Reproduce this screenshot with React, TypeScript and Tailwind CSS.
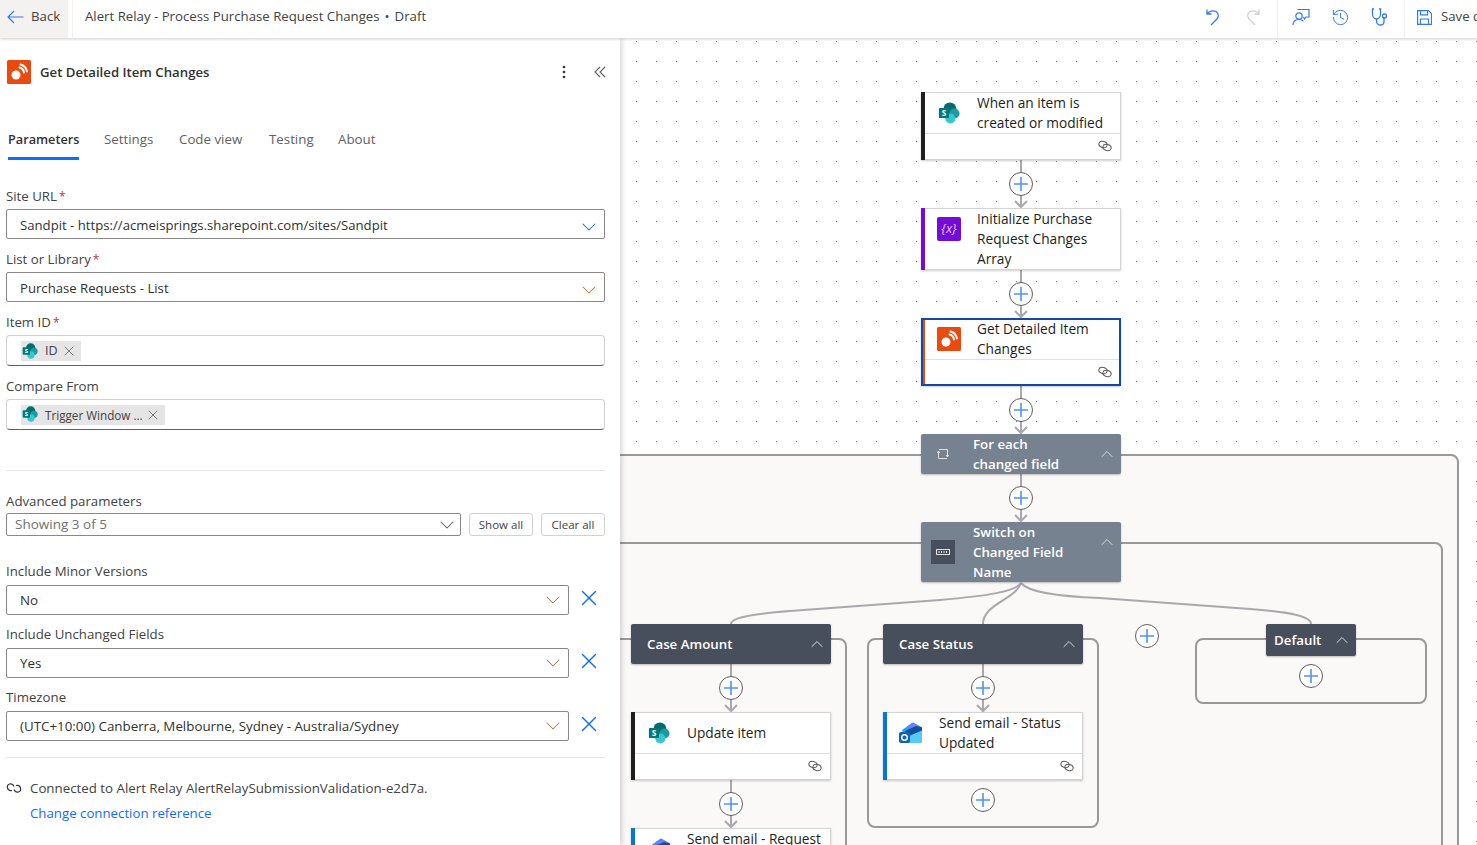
import { ChevronDown, ChevronUp, History, X } from "lucide-react";

function SharePointIcon({ size = 22 }: { size?: number }) {
  return (
    <svg width={size} height={size} viewBox="0 0 24 24" className="shrink-0">
      <circle cx="13" cy="7.500" r="7" fill="#036c70" />
      <circle cx="18" cy="12.500" r="5.500" fill="#1a9ba1" />
      <circle cx="13.500" cy="18" r="5.500" fill="#37c6d0" />
      <rect x="1" y="6.500" width="11" height="11" rx="1" fill="#03787c" />
      <text x="6.500" y="15.300" textAnchor="middle" fontSize="9" fontWeight="700" fill="#fff">S</text>
    </svg>
  );
}

function RssIcon({ size = 24 }: { size?: number }) {
  return (
    <svg width={size} height={size} viewBox="0 0 24 24" className="shrink-0">
      <rect width="24" height="24" rx="1.500" fill="#eb4a0e" />
      <circle cx="9" cy="15" r="4.500" fill="#fff" />
      <path d="M12.500 7.500a6 6 0 0 1 4.500 5M13.500 4.500a9 9 0 0 1 6.500 7" fill="none" stroke="#fff" strokeWidth="2" strokeLinecap="round" />
    </svg>
  );
}

function VarIcon() {
  return (
    <div className="flex h-6 w-6 items-center justify-center rounded-[2px] bg-[#770bd6] text-[13px] italic text-[#d9c2f5]">
      {"{x}"}
    </div>
  );
}

function OutlookIcon() {
  return (
    <svg width="24" height="24" viewBox="0 0 24 24" className="shrink-0">
      <path d="M3 9 14 1.500l9 5V20a2 2 0 0 1-2 2H8z" fill="#2b9df0" />
      <path d="M8 5.500 14 1.500l9 5-6 3.500z" fill="#6b7ff5" />
      <path d="M6 10l11-5 6 1.500v3.500L11 15z" fill="#0f4f9e" />
      <path d="M10 15l13-5.500V20a2 2 0 0 1-2 2H10z" fill="#55ccf5" />
      <rect x="0" y="11" width="11" height="11" rx="2" fill="#0f5fc4" />
      <circle cx="5.500" cy="16.500" r="2.800" fill="none" stroke="#fff" strokeWidth="1.500" />
    </svg>
  );
}

function LinkIcon() {
  return (
    <svg width="14" height="12" viewBox="0 0 14 12" className="shrink-0" fill="none" stroke="#605e5c" strokeWidth="1">
      <ellipse cx="5" cy="4.500" rx="4.200" ry="3" transform="rotate(15 5 4.500)" />
      <ellipse cx="9" cy="7.500" rx="4.200" ry="3" transform="rotate(15 9 7.500)" />
    </svg>
  );
}

function Chevron({ tone }: { tone: string }) {
  return <ChevronDown size={24} strokeWidth={1.05} className={`-my-1 shrink-0 ${tone}`} />;
}

function Label({ text, required }: { text: string; required?: boolean }) {
  return (
    <div className="h-5 text-[13.250px] leading-5 text-[#424242]">
      {text}
      {required && <span className="ml-[2px] text-[12px] text-[#c4314b]">*</span>}
    </div>
  );
}

function SelectBox({
  value,
  tone,
  className,
  textClass = "pt-px text-[13.350px]",
}: {
  value: string;
  tone: string;
  className: string;
  textClass?: string;
}) {
  return (
    <div className={`flex h-[30px] items-center justify-between rounded-[2px] border border-[#8a8886] pl-[13px] pr-[3px] text-[#323130] ${className}`}>
      <span className={textClass}>{value}</span>
      <Chevron tone={tone} />
    </div>
  );
}

function TokenBox({ text, width, small }: { text: string; width: string; small?: boolean }) {
  return (
    <div className="flex h-[31px] items-center rounded-[4px] border border-[#d1d1d1] border-b-[#616161] pl-[14px]">
      <div className={`flex h-5 items-center justify-between bg-[#e5e5e5] pl-px pr-1 text-[#424242] ${width} ${small ? "text-[11.700px]" : "text-[12.500px]"}`}>
        <span className="flex items-center gap-[7px]">
          <SharePointIcon size={16} />
          <span className="whitespace-nowrap pt-[2px]">{text}</span>
        </span>
        <X size={16} strokeWidth={1} className="shrink-0 text-[#424242]" />
      </div>
    </div>
  );
}

function RemovableSelect({ label, value }: { label: string; value: string }) {
  return (
    <div className="mt-[9px]">
      <Label text={label} />
      <div className="mt-1 flex items-center">
        <SelectBox value={value} tone="text-[#a87a50]" className="w-[563px]" />
        <X size={26} strokeWidth={1.3} className="mb-[-2px] ml-[7px] mt-[-6px] shrink-0 text-[#0f6cff]" />
      </div>
    </div>
  );
}

function Panel() {
  return (
    <div className="relative z-10 h-full w-[620px] shrink-0 overflow-hidden bg-white pl-[6px] pr-[15px] shadow-[2px_0_5px_rgba(0,0,0,0.16)]">
      <div className="mt-[22px] flex h-6 items-center pl-px">
        <RssIcon />
        <span className="ml-[9px] pt-[2px] text-[13.200px] font-semibold text-[#323130]">Get Detailed Item Changes</span>
        <svg width="4" height="14" viewBox="0 0 4 14" className="ml-auto mr-[28px]" fill="#323130">
          <circle cx="2" cy="2" r="1.300" />
          <circle cx="2" cy="7" r="1.300" />
          <circle cx="2" cy="12" r="1.300" />
        </svg>
        <svg width="12" height="12" viewBox="0 0 12 12" className="mr-[-1px]" fill="none" stroke="#605e5c" strokeWidth="1.100">
          <path d="M6 1 1 6l5 5M11 1 6 6l5 5" />
        </svg>
      </div>

      <div className="mt-[45px] flex h-[31px] pl-[2px] text-[13.300px] leading-[21px] text-[#616161]">
        <div className="w-[96px]">
          <span className="inline-block h-[31px] w-[71px] border-b-[3px] border-[#0f6cff] text-[12.700px] font-semibold leading-5 text-[#323130]">Parameters</span>
        </div>
        <div className="w-[75px]">Settings</div>
        <div className="w-[90px]">Code view</div>
        <div className="w-[69px]">Testing</div>
        <div>About</div>
      </div>

      <div className="mt-[26px]">
        <Label text="Site URL" required />
      </div>
      <div className="mt-[3px]">
        <SelectBox
          value="Sandpit - https://acmeisprings.sharepoint.com/sites/Sandpit"
          tone="mt-px text-[#0f6cbd]"
          className="w-full"
          textClass="pt-1 text-[13.170px]"
        />
      </div>
      <div className="mt-[10px]">
        <Label text="List or Library" required />
      </div>
      <div className="mt-[3px]">
        <SelectBox value="Purchase Requests - List" tone="mt-px text-[#c8702b]" className="w-full" textClass="pt-1 text-[13.170px]" />
      </div>
      <div className="mt-[10px]">
        <Label text="Item ID" required />
      </div>
      <div className="mt-[3px]">
        <TokenBox text="ID" width="w-[60px]" />
      </div>
      <div className="mt-[10px]">
        <Label text="Compare From" />
      </div>
      <div className="mt-[3px]">
        <TokenBox text="Trigger Window ..." width="w-[144px]" small />
      </div>

      <div className="mt-[40px] h-px bg-[#e5e5e5]" />

      <div className="mt-[20px]">
        <Label text="Advanced parameters" />
      </div>
      <div className="mt-[2px] flex h-[23px] gap-2">
        <div className="flex w-[455px] items-center justify-between rounded-[2px] border border-[#8a8886] pl-2 pr-px text-[13.500px] text-[#707070]">
          <span>Showing 3 of 5</span>
          <Chevron tone="text-[#605e5c]" />
        </div>
        <div className="flex w-[64px] items-center justify-center rounded-[3px] border border-[#d1d1d1] text-[11.500px] text-[#424242]">Show all</div>
        <div className="flex w-[64px] items-center justify-center rounded-[3px] border border-[#d1d1d1] text-[11.500px] text-[#424242]">Clear all</div>
      </div>

      <div className="h-4" />
      <RemovableSelect label="Include Minor Versions" value="No" />
      <RemovableSelect label="Include Unchanged Fields" value="Yes" />
      <RemovableSelect label="Timezone" value="(UTC+10:00) Canberra, Melbourne, Sydney - Australia/Sydney" />

      <div className="mt-4 h-px bg-[#e5e5e5]" />

      <div className="mt-5 flex h-5 items-center text-[13.300px] text-[#424242]">
        <svg width="16" height="14" viewBox="0 0 16 14" fill="none" stroke="#323130" strokeWidth="1.200" className="shrink-0">
          <path d="M8 5.500C7 3 5 2.500 3.500 3S1 5 1.500 7 4 10 6 9.500M8 8.500c1 2.500 3 3 4.500 2.500s2.500-2 2-4-2.500-3-4.500-2.500" />
        </svg>
        <span className="ml-2 pt-[2px]">Connected to Alert Relay AlertRelaySubmissionValidation-e2d7a.</span>
      </div>
      <div className="mt-[5px] h-5 pl-6 text-[13.250px] leading-5 text-[#0f6cff]">Change connection reference</div>
    </div>
  );
}

function Plus({ className }: { className: string }) {
  return (
    <div className={`absolute flex h-6 w-6 items-center justify-center rounded-full border border-[#605e5c] bg-white ${className}`}>
      <svg width="14" height="14" viewBox="0 0 14 14" stroke="#4f94f5" strokeWidth="1.600">
        <path d="M7 0v14M0 7h14" />
      </svg>
    </div>
  );
}

function ActionNode({
  title,
  icon,
  bar,
  className,
  footer = true,
}: {
  title: string[];
  icon: React.ReactNode;
  bar: string;
  className: string;
  footer?: boolean;
}) {
  return (
    <div className={`absolute flex w-[200px] bg-white shadow-[inset_0_0_0_1px_#d4d4d4,0_1px_2px_rgba(0,0,0,0.2)] ${className}`}>
      <div className={`w-1 shrink-0 ${bar}`} />
      <div className="flex min-w-0 flex-1 flex-col">
        <div className="flex min-h-[41px] flex-1 items-center">
          <div className="mt-[9px] flex h-6 w-[48px] shrink-0 items-center justify-center self-start">{icon}</div>
          <div className="pl-1 text-[13.700px] font-medium leading-5 text-[#201f1e]">
            {title.map((line, i) => (
              <div key={i} className="whitespace-nowrap">{line}</div>
            ))}
          </div>
        </div>
        {footer && (
          <div className="mr-px flex h-[27px] shrink-0 items-center justify-end border-t border-[#e1dfdd] pb-[2px] pr-2">
            <LinkIcon />
          </div>
        )}
      </div>
    </div>
  );
}

function GroupNode({
  title,
  icon,
  className,
  tone,
  textLeft,
  chevronTop = "top-[10px]",
}: {
  title: string[];
  icon?: React.ReactNode;
  className: string;
  tone: string;
  textLeft: string;
  chevronTop?: string;
}) {
  return (
    <div className={`absolute flex items-center rounded-[2px] text-[13.300px] font-semibold leading-5 text-white shadow-[0_1px_2px_rgba(0,0,0,0.25)] ${tone} ${className}`}>
      {icon}
      <div className={textLeft}>
        {title.map((line) => (
          <div key={line} className="whitespace-nowrap">{line}</div>
        ))}
      </div>
      <ChevronUp size={20} strokeWidth={1.2} className={`absolute right-[4px] text-[#dcdcdc] ${chevronTop}`} />
    </div>
  );
}

const EDGE_PATHS = [
  "M1021 160V207M1015 201l6 6 6-6",
  "M1021 270V317M1015 311l6 6 6-6",
  "M1021 386V433M1015 427l6 6 6-6",
  "M1021 474V521M1015 515l6 6 6-6",
  "M731 664V711M725 705l6 6 6-6",
  "M731 780V827M725 821l6 6 6-6",
  "M983 664V711M977 705l6 6 6-6",
];

function Canvas() {
  return (
    <div className="relative h-full flex-1 overflow-hidden bg-white bg-[radial-gradient(circle_at_10.5px_10.5px,#808080_0.6px,transparent_0.7px)] bg-[size:20px_20px] bg-[position:6px_-7px]">
      {/* scopes */}
      <div className="absolute left-[-20px] top-[416px] h-[500px] w-[859px] rounded-lg border-2 border-[#999999] bg-[#faf9f7]" />
      <div className="absolute left-[-20px] top-[504px] h-[500px] w-[843px] rounded-lg border-2 border-[#999999]" />
      <div className="absolute left-[-20px] top-[600px] h-[400px] w-[247px] rounded-lg border-2 border-[#999999]" />
      <div className="absolute left-[247px] top-[600px] h-[190px] w-[232px] rounded-lg border-2 border-[#999999]" />
      <div className="absolute left-[575px] top-[600px] h-[66px] w-[232px] rounded-lg border-2 border-[#999999]" />

      {/* edges */}
      <svg viewBox="620 38 857 807" className="absolute inset-0 h-full w-full" fill="none" stroke="#aaa8ac" strokeWidth="2">
        {EDGE_PATHS.map((d) => (
          <path key={d} d={d} />
        ))}
        <path d="M1021 583C1015 592 985 596 940 600L790 611C750 614 731 618 731 624" />
        <path d="M1021 583C1015 600 983 604 983 624" />
        <path d="M1021 583C1030 594 1070 597 1100 598L1250 609C1290 612 1311 616 1311 624" />
      </svg>

      <ActionNode className="left-[301px] top-[54px] h-[68px]" bar="bg-[#201f1e]" icon={<SharePointIcon />} title={["When an item is", "created or modified"]} />
      <Plus className="left-[389px] top-[134px]" />
      <ActionNode className="left-[301px] top-[170px] h-[62px]" bar="bg-[#770bd6]" icon={<VarIcon />} footer={false} title={["Initialize Purchase", "Request Changes", "Array"]} />
      <Plus className="left-[389px] top-[244px]" />
      <ActionNode className="left-[301px] top-[280px] h-[68px] outline-2 -outline-offset-2 outline-[#0f4aa7]" bar="bg-[#eb4a0e]" icon={<RssIcon />} title={["Get Detailed Item", "Changes"]} />
      <Plus className="left-[389px] top-[360px]" />
      <GroupNode
        className="left-[301px] top-[396px] h-10 w-[200px]"
        tone="bg-[#768290]"
        textLeft="ml-[52px]"
        title={["For each", "changed field"]}
        icon={
          <svg width="12" height="12" viewBox="0 0 12 12" fill="none" stroke="#e1dfdd" strokeWidth="1" className="absolute left-4 top-[14px]">
            <path d="M2 1.500h8.500V9M10 10.500H1.500V3M0 5 1.500 3 3 5M9 7l1.500 2L12 7" />
          </svg>
        }
      />
      <Plus className="left-[389px] top-[448px]" />
      <GroupNode
        className="left-[301px] top-[484px] h-[60px] w-[200px]"
        tone="bg-[#768290]"
        textLeft="ml-[52px]"
        title={["Switch on", "Changed Field", "Name"]}
        icon={
          <div className="absolute left-[10px] top-[18px] flex h-6 w-6 items-center justify-center bg-[#474f5c]">
            <svg width="14" height="6" viewBox="0 0 14 6" fill="none" stroke="#e1dfdd" strokeWidth="1">
              <rect x="0.500" y="0.500" width="13" height="5" />
              <path d="M3 2v2M5.500 2v2M8 2v2M10.500 2v2" />
            </svg>
          </div>
        }
      />

      <GroupNode className="left-[11px] top-[586px] h-10 w-[200px]" tone="bg-[#474f5c]" textLeft="ml-4" title={["Case Amount"]} />
      <GroupNode className="left-[263px] top-[586px] h-10 w-[200px]" tone="bg-[#474f5c]" textLeft="ml-4" title={["Case Status"]} />
      <GroupNode className="left-[646px] top-[586px] h-8 w-[90px]" tone="bg-[#474f5c]" textLeft="ml-2" chevronTop="top-[6px]" title={["Default"]} />

      <Plus className="left-[99px] top-[638px]" />
      <ActionNode className="left-[11px] top-[674px] h-[68px]" bar="bg-[#201f1e]" icon={<SharePointIcon />} title={["Update item"]} />
      <Plus className="left-[99px] top-[754px]" />
      <ActionNode className="left-[11px] top-[790px] h-[68px]" bar="bg-[#0078d4]" icon={<OutlookIcon />} title={["Send email - Request", "\u00a0"]} />

      <Plus className="left-[351px] top-[638px]" />
      <ActionNode className="left-[263px] top-[674px] h-[68px]" bar="bg-[#0078d4]" icon={<OutlookIcon />} title={["Send email - Status", "Updated"]} />
      <Plus className="left-[351px] top-[750px]" />

      <Plus className="left-[515px] top-[586px]" />
      <Plus className="left-[679px] top-[626px]" />
    </div>
  );
}

function Header() {
  const blue = "#2f7bf0";
  return (
    <div className="relative z-20 flex h-[38px] shrink-0 items-center bg-white text-[13.230px] text-[#424242] shadow-[0_1px_3px_rgba(0,0,0,0.2)]">
      <div className="flex h-full w-[68px] shrink-0 items-center bg-[#f3f2f1] pl-[7px]">
        <svg width="17" height="14" viewBox="0 0 17 14" fill="none" stroke={blue} strokeWidth="1.200" className="mb-1 shrink-0">
          <path d="M16.500 7H1M7 1 1 7l6 6" />
        </svg>
        <span className="mb-1 ml-[7px]">Back</span>
      </div>
      <div className="ml-1 h-full w-px shrink-0 bg-[#f3f2f1]" />
      <div className="mb-1 ml-3 flex-1 whitespace-nowrap">
        Alert Relay - Process Purchase Request Changes<span className="mx-[5px]">•</span>Draft
      </div>
      <div className="flex h-full w-[273px] shrink-0 items-center overflow-hidden">
        <svg width="18" height="18" viewBox="0 0 18 18" fill="none" stroke={blue} strokeWidth="1.300" className="mb-1 shrink-0">
          <path d="M3 1.500V6h4.500M3 6c2-3 6-4 9-2.500 3 2 3 5.500.5 8L7 17" />
        </svg>
        <svg width="18" height="18" viewBox="0 0 18 18" fill="none" stroke="#d2d0ce" strokeWidth="1.300" className="mb-1 ml-[22px] shrink-0">
          <path d="M15 1.500V6h-4.500M15 6c-2-3-6-4-9-2.500-3 2-3 5.500-.5 8L11 17" />
        </svg>
        <div className="ml-[15px] h-full w-px shrink-0 bg-[#f3f2f1]" />
        <svg width="18" height="18" viewBox="0 0 18 18" fill="none" stroke={blue} strokeWidth="1.200" className="mb-1 ml-[14px] shrink-0">
          <circle cx="7" cy="8" r="3.200" />
          <path d="M1 17c0-3.500 2.500-5.500 6-5.500 2 0 3.500.6 4.500 1.800M5.500 1.500H17v7.500h-3l-1.500 2-1-2" />
        </svg>
        <History size={19} strokeWidth={1.25} color={blue} className="mb-1 ml-[21px] shrink-0" />
        <svg width="18" height="18" viewBox="0 0 18 18" fill="none" stroke={blue} strokeWidth="1.300" className="mb-1 ml-[21px] shrink-0">
          <path d="M3 1H1.500v5c0 3 2 5 4 5s4-2 4-5V1H8M5.500 11v2c0 2.500 2 4 4 4s3.500-1.500 3.500-3.500V10" />
          <circle cx="13.500" cy="8" r="2" />
        </svg>
        <div className="ml-[15px] h-full w-px shrink-0 bg-[#f3f2f1]" />
        <svg width="15" height="15" viewBox="0 0 15 15" fill="none" stroke={blue} strokeWidth="1.200" className="mb-1 ml-3 shrink-0">
          <path d="M1.500.6h10l3 3v10.800H.6V.6zM3.500.6v4.200h7V.6M3.500 14.400V9h8v5.400" />
        </svg>
        <span className="mb-1 ml-[9px] whitespace-nowrap">Save draft</span>
      </div>
    </div>
  );
}

export default function App() {
  return (
    <div className="flex h-[845px] w-[1477px] flex-col overflow-hidden bg-white [font-family:'Open_Sans',sans-serif]">
      <Header />
      <div className="flex min-h-0 flex-1">
        <Panel />
        <Canvas />
      </div>
    </div>
  );
}
